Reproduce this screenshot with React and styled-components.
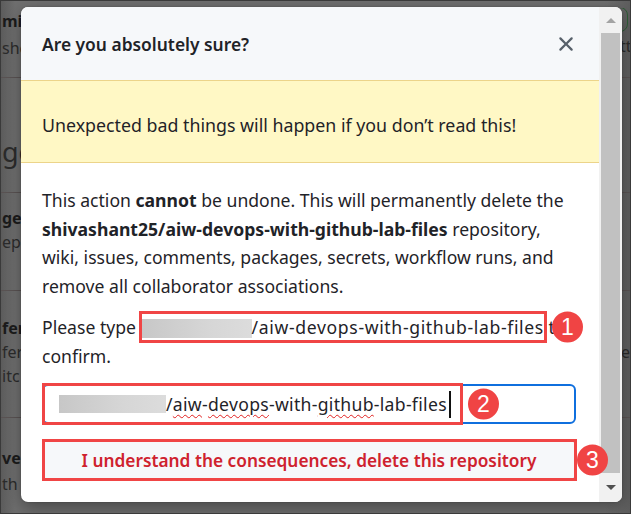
import React from "react";
import styled, { createGlobalStyle } from "styled-components";

const GlobalStyle = createGlobalStyle`
  html, body { margin: 0; padding: 0; }
  body { font-family: "Noto Sans", "Open Sans", sans-serif; }
  * { box-sizing: border-box; }
`;

const Screen = styled.div`
  position: relative;
  width: 631px;
  height: 514px;
  overflow: hidden;
  border: 1px solid #3a3a3a;
  background: linear-gradient(90deg, #5c5c5c 0px, #6f6f6f 14px, #6f6f6f 96%, #5e5e5e 100%);
`;

/* dimmed settings page behind the dialog */
const BgPage = styled.div`
  display: flex;
  flex-direction: column;
  width: 100%;
`;

const BgSection = styled.div`
  display: flex;
  justify-content: space-between;
  align-items: flex-start;
  height: ${(p) => p.$h}px;
  padding-top: ${(p) => p.$pt}px;
  border-bottom: ${(p) => (p.$line ? "1px solid #5a5353" : "none")};
  flex-shrink: 0;
`;

const BgCol = styled.div`
  display: flex;
  flex-direction: column;
  align-items: flex-start;
  width: ${(p) => (p.$right ? "52px" : "auto")};
  padding-left: ${(p) => (p.$right ? "0" : "1px")};
  overflow: hidden;
`;

const BgText = styled.div`
  font-size: ${(p) => (p.$big ? "27px" : "16px")};
  line-height: ${(p) => (p.$big ? "34px" : p.$lh || "24px")};
  font-weight: ${(p) => (p.$bold ? 700 : 400)};
  color: ${(p) => (p.$bold ? "#1b1b1b" : "#2b2b2b")};
  padding-left: ${(p) => p.$indent || 0}px;
  white-space: nowrap;
`;

const GreenButton = styled.div`
  width: 50px;
  height: 25px;
  margin-top: -1px;
  margin-bottom: 1px;
  border: 1px solid #2f5e37;
  border-radius: 8px;
`;

/* dialog */
const Dialog = styled.div`
  position: absolute;
  left: 20px;
  top: 6px;
  width: 601px;
  height: 495px;
  display: flex;
  background: #ffffff;
  border-radius: 7px;
  overflow: hidden;
  box-shadow: 0 6px 18px rgba(0, 0, 0, 0.35), 0 0 2px rgba(0, 0, 0, 0.25);
`;

const DialogMain = styled.div`
  flex: 1;
  display: flex;
  flex-direction: column;
  min-width: 0;
`;

const Header = styled.div`
  height: 73px;
  flex-shrink: 0;
  display: flex;
  align-items: center;
  justify-content: space-between;
  padding: 0 17px 0 21px;
  background: #f6f8fa;
`;

const Title = styled.h1`
  margin: 0;
  font-size: 17.4px;
  font-weight: 600;
  color: #1f2328;
`;

const CloseButton = styled.button`
  width: 32px;
  height: 32px;
  display: flex;
  align-items: center;
  justify-content: center;
  padding: 0;
  border: 0;
  background: transparent;
  color: #57606a;
`;

const Flash = styled.div`
  height: 83px;
  flex-shrink: 0;
  padding: 30px 21px 0;
  background: #fff8c5;
  border-top: 1px solid #ecd48a;
  border-bottom: 1px solid #ecd48a;
  font-size: 17.8px;
  line-height: 28px;
  color: #1f2328;
`;

const Body = styled.div`
  padding: 23px 23px 0 21px;
  color: #1f2328;
  font-size: 17.6px;
  line-height: 28.5px;
`;

const Para = styled.p`
  margin: 0 0 ${(p) => p.$mb || 0}px;
  white-space: nowrap;
`;

const Redacted = styled.span`
  display: inline-block;
  width: ${(p) => p.$w}px;
  height: ${(p) => p.$h}px;
  vertical-align: ${(p) => p.$va}px;
  background: linear-gradient(90deg, #c7c7c7, #d6d6d6 60%, #dcdcdc);
`;

const Mark = styled.span`
  position: relative;
  letter-spacing: 0.65px;
  &::after {
    content: "";
    position: absolute;
    top: -4px;
    bottom: -4px;
    left: -2px;
    right: -3px;
    border: 3px solid #f04545;
  }
`;

const Badge = styled.span`
  position: absolute;
  left: calc(100% + ${(p) => p.$gap}px);
  top: 50%;
  transform: translateY(-50%);
  width: 31px;
  height: 31px;
  border-radius: 50%;
  background: #f04444;
  color: #ffffff;
  font-family: "Liberation Sans", Arial, sans-serif;
  font-size: 23px;
  letter-spacing: 0;
  line-height: 31px;
  text-align: center;
  z-index: 2;
`;

const FieldWrap = styled.div`
  position: relative;
  margin-top: 14px;
`;

const Field = styled.div`
  height: 40px;
  display: flex;
  align-items: center;
  padding-left: 15px;
  border: 2px solid #0f6fde;
  border-radius: 6px;
  background: #ffffff;
  font-size: 17.6px;
  letter-spacing: 0.3px;
  color: #1f2328;
  white-space: nowrap;
`;

const Typo = styled.span`
  text-decoration: underline wavy #e02020;
  text-decoration-thickness: 1.4px;
  text-underline-offset: 3px;
`;

const Caret = styled.span`
  display: inline-block;
  width: 2px;
  height: 27px;
  margin-left: 2px;
  background: #111111;
`;

const Annotation = styled.div`
  position: absolute;
  top: -1px;
  bottom: -1px;
  left: 0;
  width: ${(p) => p.$w || "calc(100% + 1px)"};
  border: 3px solid #f04545;
  pointer-events: none;
`;

const ButtonWrap = styled.div`
  position: relative;
  margin-top: 16px;
`;

const DangerButton = styled.button`
  width: 100%;
  height: 40px;
  border: 1px solid #d0d7de;
  border-radius: 6px;
  background: #f6f8fa;
  color: #cf222e;
  font-family: "Noto Sans", "Open Sans", sans-serif;
  font-size: 17.3px;
  font-weight: 600;
`;

const Scrollbar = styled.div`
  width: 23px;
  flex-shrink: 0;
  display: flex;
  flex-direction: column;
  background: #f1f1f1;
`;

const ArrowCell = styled.div`
  height: ${(p) => p.$h}px;
  display: flex;
  align-items: center;
  justify-content: center;
  flex-shrink: 0;
`;

const Arrow = styled.span`
  width: 0;
  height: 0;
  border-left: 5px solid transparent;
  border-right: 5px solid transparent;
  ${(p) =>
    p.$down
      ? `border-top: 5px solid #505050;`
      : `border-bottom: 5px solid #a3a3a3;`}
`;

const Thumb = styled.div`
  height: 440px;
  margin: 0 2px;
  background: #c1c1c1;
`;

const XIcon = () => (
  <svg width="24" height="24" viewBox="0 0 16 16" fill="currentColor">
    <path d="M3.72 3.72a.75.75 0 0 1 1.06 0L8 6.94l3.22-3.22a.749.749 0 0 1 1.275.326.749.749 0 0 1-.215.734L9.06 8l3.22 3.22a.749.749 0 0 1-.326 1.275.749.749 0 0 1-.734-.215L8 9.06l-3.220 3.22a.751.751 0 0 1-1.042-.018.751.751 0 0 1-.018-1.042L6.94 8 3.72 4.78a.75.75 0 0 1 0-1.06Z" />
  </svg>
);

const App = () => {
  return (
    <>
      <GlobalStyle />
      <Screen>
        <BgPage>
          <BgSection $h={77} $pt={7} $line>
            <BgCol>
              <BgText $bold $lh="27px">mit</BgText>
              <BgText $lh="27px">shed</BgText>
            </BgCol>
            <BgCol $right>
              <GreenButton />
              <BgText $indent={42} $lh="27px">tt</BgText>
            </BgCol>
          </BgSection>
          <BgSection $h={115} $pt={57} $line>
            <BgCol>
              <BgText $big>ge</BgText>
            </BgCol>
          </BgSection>
          <BgSection $h={98} $pt={13} $line>
            <BgCol>
              <BgText $bold>ge</BgText>
              <BgText>ep</BgText>
            </BgCol>
          </BgSection>
          <BgSection $h={127} $pt={25} $line>
            <BgCol>
              <BgText $bold>fer</BgText>
              <BgText>fer</BgText>
              <BgText>itc</BgText>
            </BgCol>
            <BgCol $right>
              <BgText>&nbsp;</BgText>
              <BgText $indent={43}>e</BgText>
            </BgCol>
          </BgSection>
          <BgSection $h={100} $pt={27}>
            <BgCol>
              <BgText $bold $lh="26px">ve</BgText>
              <BgText $lh="26px">th</BgText>
            </BgCol>
          </BgSection>
        </BgPage>

        <Dialog>
          <DialogMain>
            <Header>
              <Title>Are you absolutely sure?</Title>
              <CloseButton aria-label="Close">
                <XIcon />
              </CloseButton>
            </Header>
            <Flash>Unexpected bad things will happen if you don’t read this!</Flash>
            <Body>
              <Para $mb={13}>
                This action <strong>cannot</strong> be undone. This will permanently delete the
                <br />
                <strong>shivashant25/aiw-devops-with-github-lab-files</strong> repository,
                <br />
                wiki, issues, comments, packages, secrets, workflow runs, and
                <br />
                remove all collaborator associations.
              </Para>
              <Para>
                Please type{" "}
                <Mark>
                  <Redacted $w={111} $h={19} $va={-4} />
                  /aiw-devops-with-github-lab-files
                  <Badge $gap={8}>1</Badge>
                </Mark>{" "}
                to
                <br />
                confirm.
              </Para>
              <FieldWrap>
                <Field>
                  <Redacted $w={107} $h={18} $va={0} />
                  /<Typo>aiw</Typo>-<Typo>devops</Typo>-with-<Typo>github</Typo>-lab-files
                  <Caret />
                </Field>
                <Annotation $w="421px">
                  <Badge $gap={8}>2</Badge>
                </Annotation>
              </FieldWrap>
              <ButtonWrap>
                <DangerButton>I understand the consequences, delete this repository</DangerButton>
                <Annotation>
                  <Badge $gap={3}>3</Badge>
                </Annotation>
              </ButtonWrap>
            </Body>
          </DialogMain>
          <Scrollbar>
            <ArrowCell $h={26}>
              <Arrow />
            </ArrowCell>
            <Thumb />
            <ArrowCell $h={29}>
              <Arrow $down />
            </ArrowCell>
          </Scrollbar>
        </Dialog>
      </Screen>
    </>
  );
};

export default App;
